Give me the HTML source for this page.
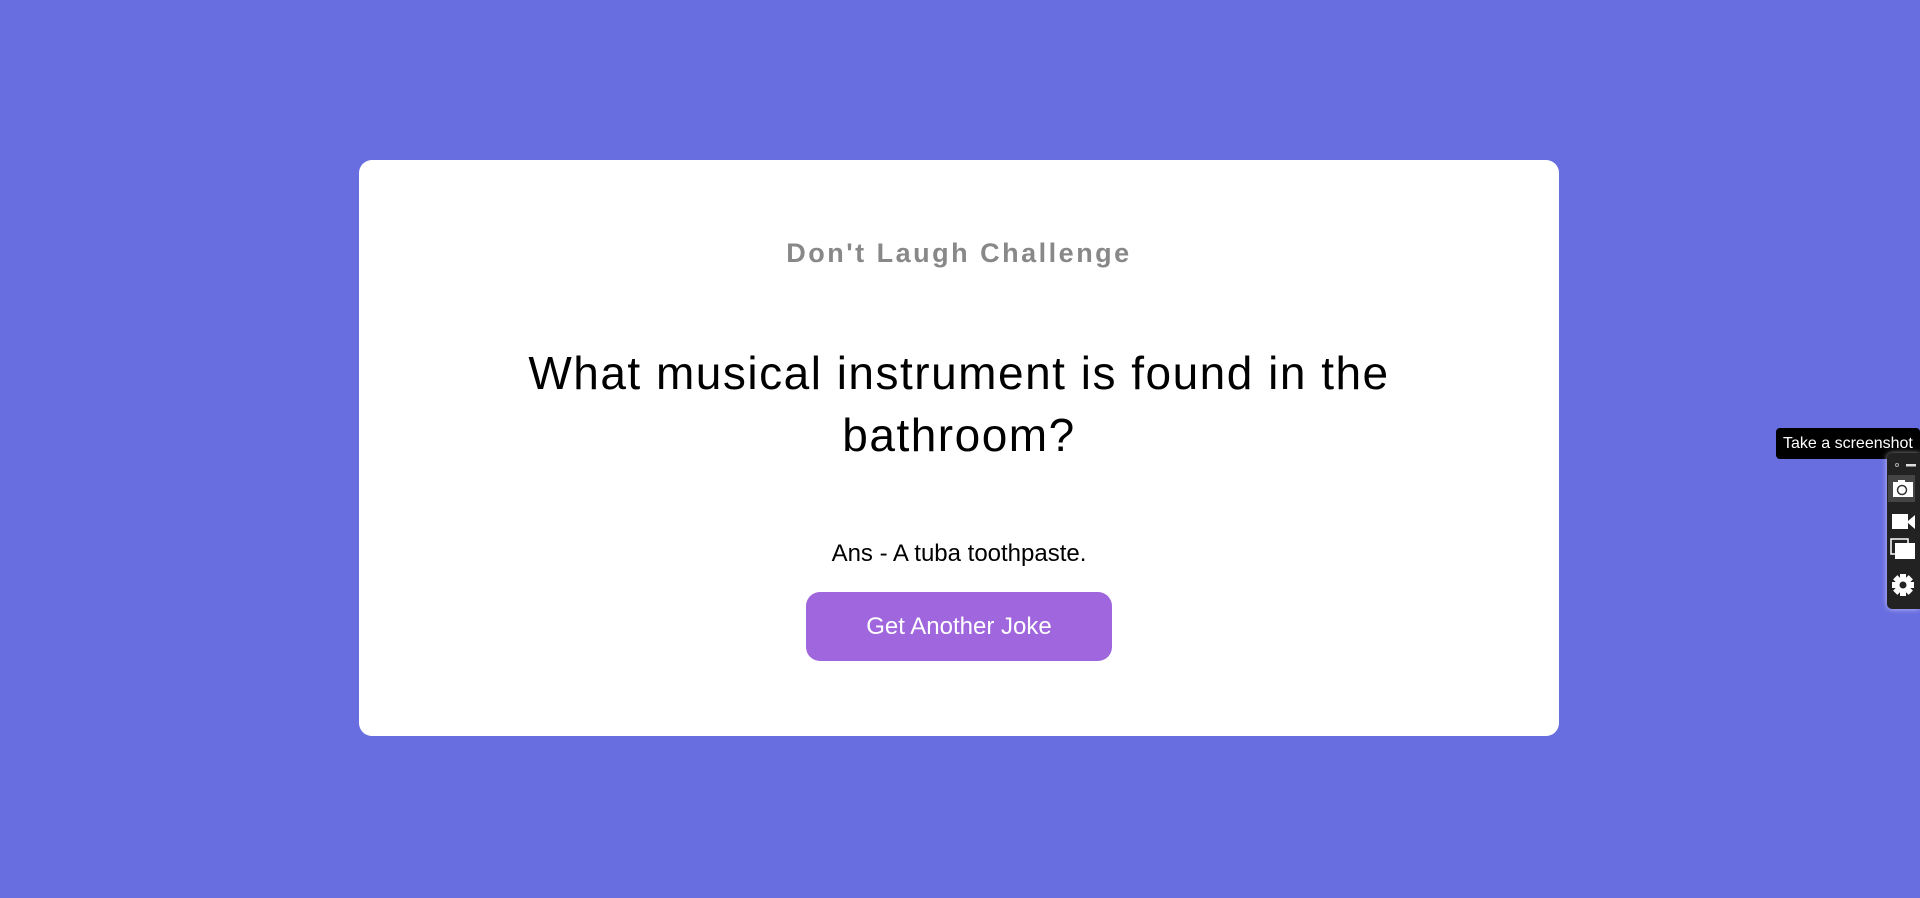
<!DOCTYPE html>
<html><head><meta charset="utf-8"><style>
html,body{margin:0;padding:0;width:1920px;height:898px;overflow:hidden;background:#686de0;font-family:"Liberation Sans",sans-serif}
.card{position:absolute;left:359px;top:160px;width:1200px;height:576px;background:#fff;border-radius:13px;text-align:center}
.t{position:absolute;top:238px;left:359px;width:1200px;text-align:center;font-size:27px;font-weight:bold;letter-spacing:2.5px;color:#888}
.q{position:absolute;top:342px;left:460px;width:998px;text-align:center;font-size:46px;line-height:62px;color:#000;letter-spacing:1.5px}
.a{position:absolute;top:540px;left:359px;width:1200px;text-align:center;font-size:24px;color:#000}
.b{position:absolute;left:806px;top:592px;width:306px;height:69px;background:#a066dd;border-radius:14px;color:#fff;font-size:24px;line-height:69px;text-align:center}
.tip{position:absolute;left:1776px;top:428px;width:144px;height:31px;background:#000;border-radius:4px;color:#fff;font-size:16px;line-height:31px;text-indent:7px}
.tb{position:absolute;left:1887px;top:453px;width:33px;height:156px;background:#222;border-radius:5px 0 0 5px;box-shadow:0 0 6px rgba(255,255,255,.6)}
</style></head><body>
<div class="card"></div>
<div class="t">Don't Laugh Challenge</div>
<div class="q">What musical instrument is found in the bathroom?</div>
<div class="a">Ans - A tuba toothpaste.</div>
<div class="b">Get Another Joke</div>
<div class="tip">Take a screenshot</div>
<div class="tb">
<svg width="33" height="156" viewBox="0 0 33 156">
<circle cx="10" cy="12" r="1.5" fill="none" stroke="#aaa"/>
<rect x="19" y="11" width="10" height="2.5" fill="#ddd"/>
<rect x="1" y="22" width="27" height="27" fill="#444"/>
<rect x="6" y="29" width="20" height="15" fill="#fff"/><rect x="11" y="27" width="7" height="3" fill="#fff"/>
<circle cx="15" cy="37" r="4.5" fill="none" stroke="#333" stroke-width="1.5"/>
<rect x="5" y="61" width="16" height="15" fill="#fff"/><polygon points="21,68 28,62 28,76 21,70" fill="#fff"/>
<rect x="4" y="86" width="17" height="15" fill="none" stroke="#fff" stroke-width="1.5"/>
<rect x="8" y="90" width="20" height="16" fill="#fff"/>
<g transform="translate(16,132)"><circle r="8" fill="#fff"/><g fill="#fff"><rect x="-3" y="-11" width="6" height="22"/><rect x="-11" y="-3" width="22" height="6"/><rect x="-3" y="-11" width="6" height="22" transform="rotate(45)"/><rect x="-3" y="-11" width="6" height="22" transform="rotate(-45)"/></g><circle r="3.5" fill="#222"/></g>
</svg></div>
</body></html>
